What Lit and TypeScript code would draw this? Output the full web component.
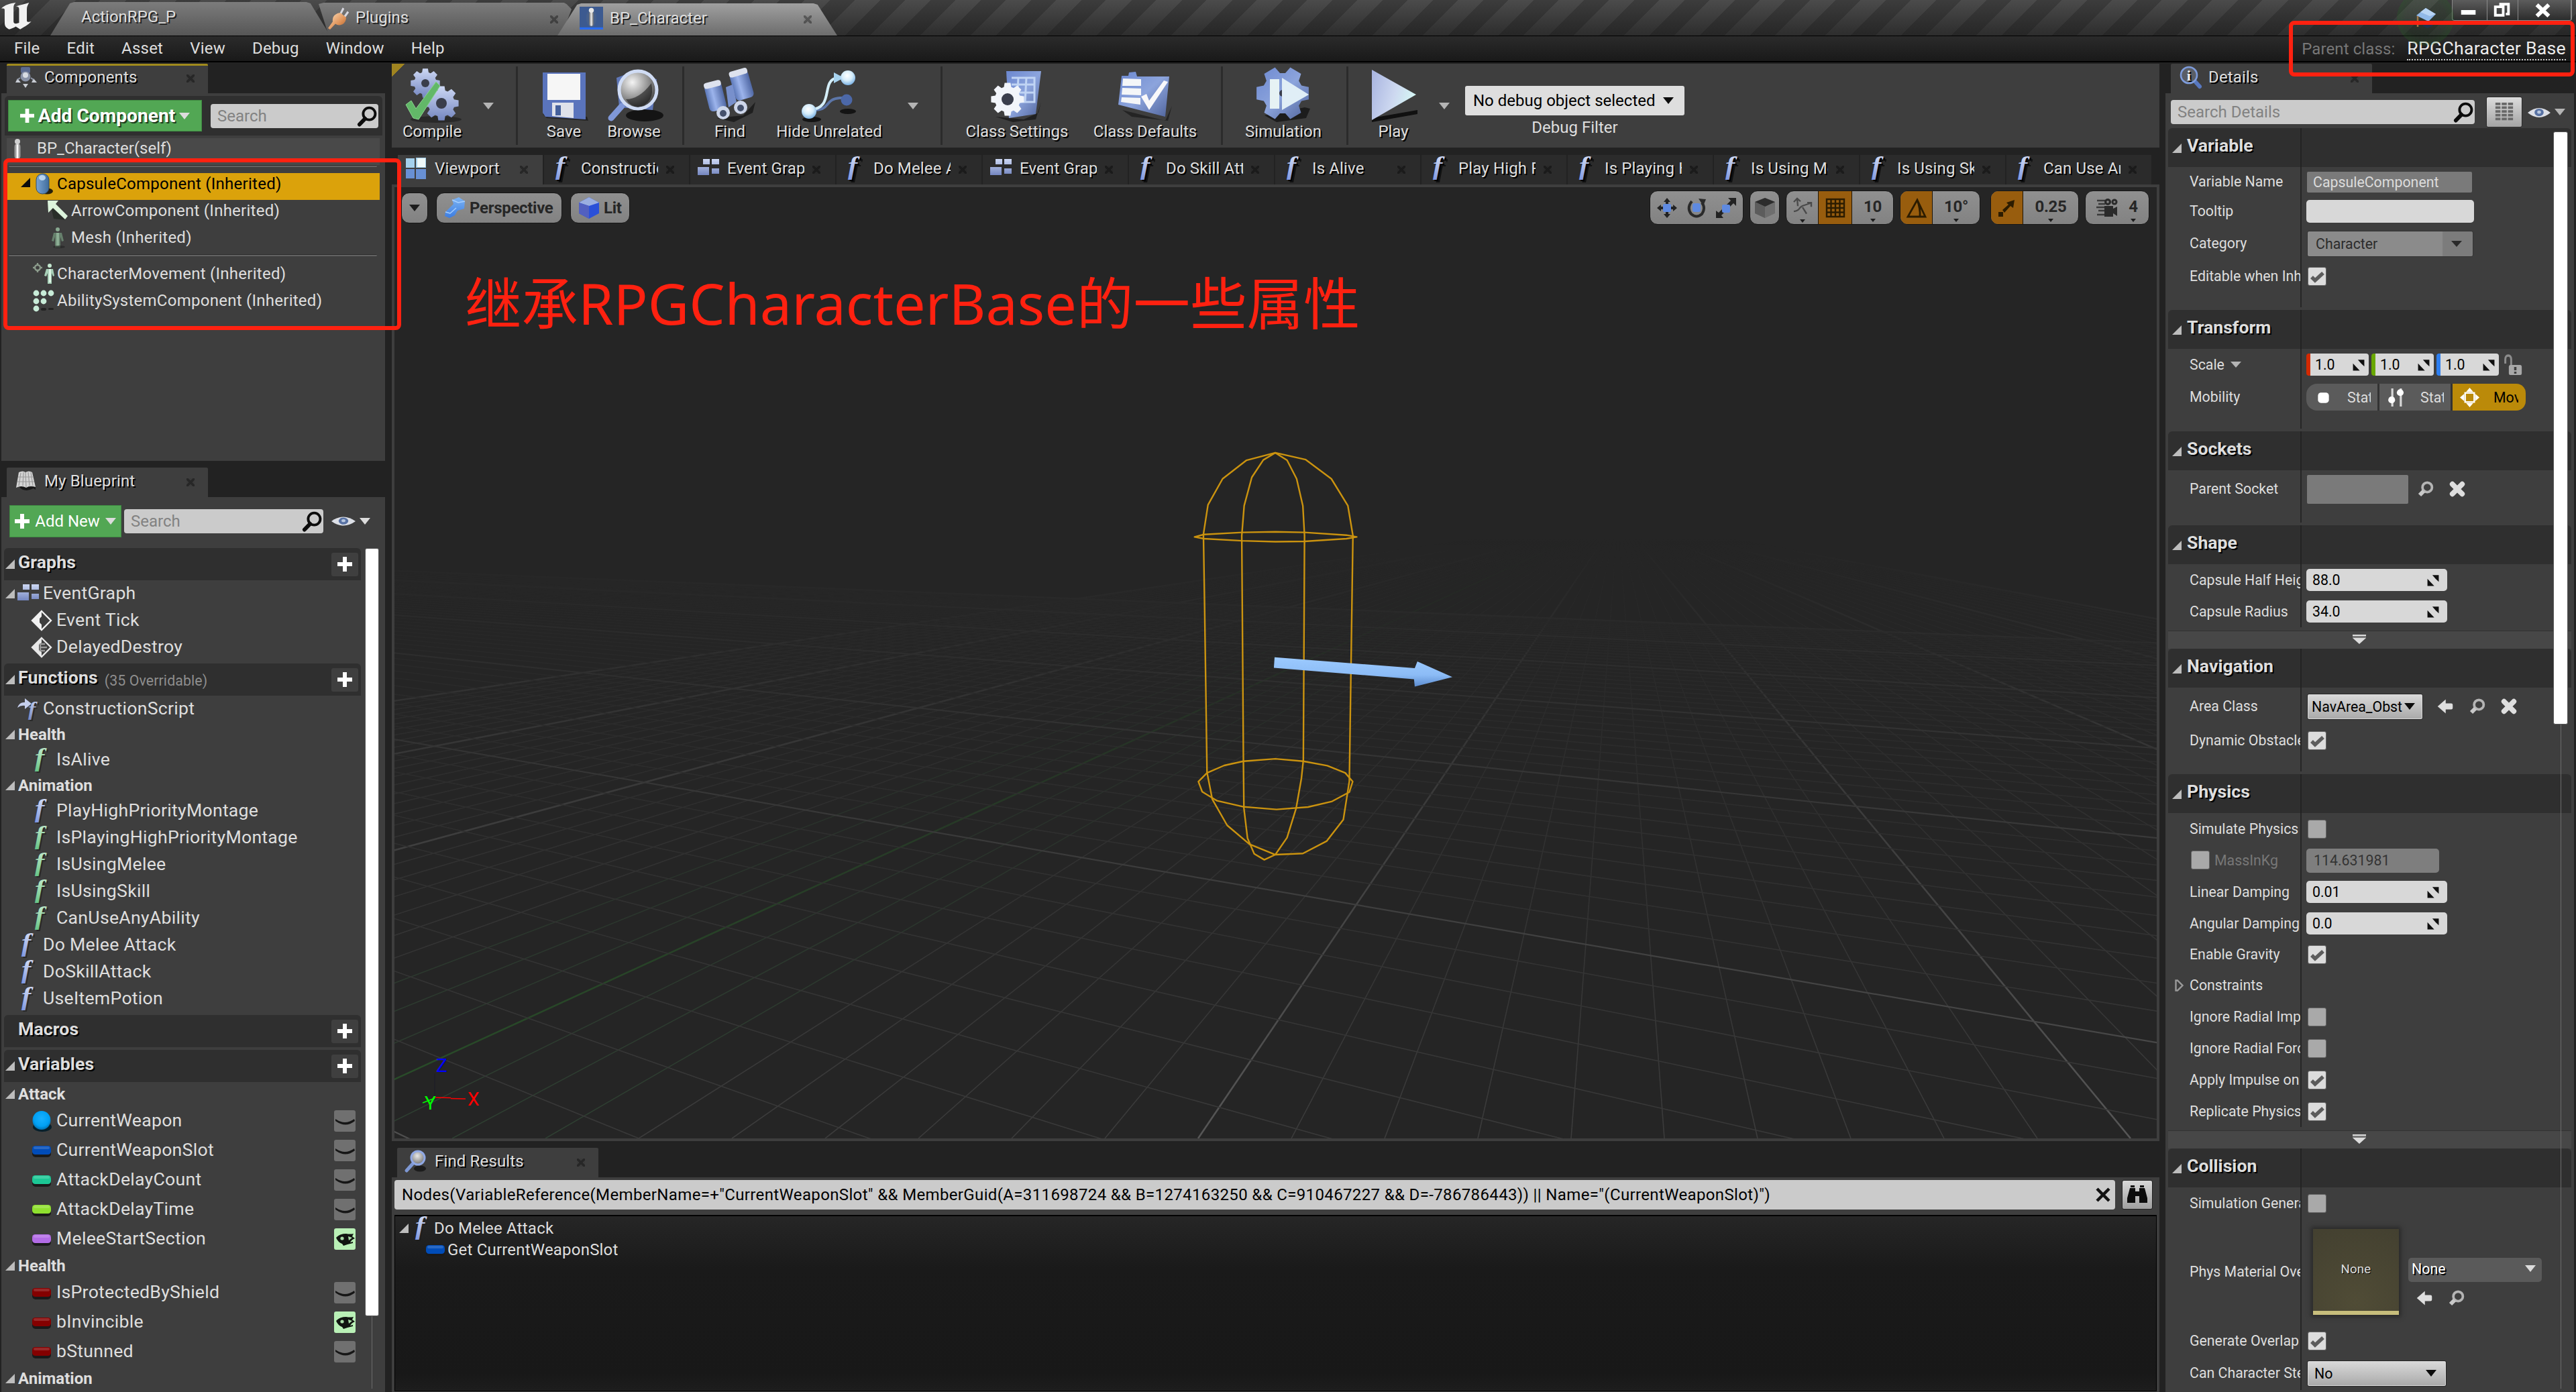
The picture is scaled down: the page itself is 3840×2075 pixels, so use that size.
import { LitElement, html, css, svg, nothing, TemplateResult } from "lit";
import { customElement, property } from "lit/decorators.js";
import { classMap } from "lit/directives/class-map.js";

const gear = (cx: number, cy: number, r: number, hole: number, fill: string, teeth = 8) => {
  const pts: string[] = [];
  for (let i = 0; i < teeth; i++) {
    const a = (i / teeth) * Math.PI * 2;
    const s = Math.PI / teeth;
    for (const [d, k] of [[-0.75, 0.76], [-0.45, 1], [0.45, 1], [0.75, 0.76]]) {
      pts.push(`${(cx + Math.cos(a + s * d) * r * k).toFixed(1)},${(cy + Math.sin(a + s * d) * r * k).toFixed(1)}`);
    }
  }
  return svg`<polygon points=${pts.join(" ")} fill=${fill} /><circle cx=${cx} cy=${cy} r=${hole} fill="#3a3e4c" />`;
};

const fGlyph = (fill: string, size = 37, x = 6, y = 25) =>
  svg`<g transform="translate(${x} ${y}) scale(1.15 1)" font-family="Liberation Serif, serif" font-style="italic" font-weight="700" font-size=${size}>
    <text x="2" y="2" fill="#1c1c1c" opacity=".6">f</text><text fill=${fill}>f</text></g>`;

const pill = (fill: string) => svg`
  <rect x="2" y="10" width="28" height="16" rx="5" fill="#1a1a1a" />
  <rect x="2" y="9" width="28" height="13" rx="4.5" fill=${fill} />
  <rect x="4" y="10" width="24" height="4" rx="2" fill="#fff" opacity=".16" />`;

const ICONS: Record<string, TemplateResult | unknown> = {
  logo: svg`<path d="M0 8C3 3 8 1 13 0C11 3 11 5 11 9V26C11 29 13 30 16 28V9C16 6 15 5 13 5C17 3 21 2 25 0C24 3 23 5 23 9V25C23 27 25 27 27 26C24 31 20 34 17 37L13 33C11 35 9 36 7 37C4 35 3 32 3 28V10C3 8 2 8 0 8Z" transform="scale(1.15 .86)" fill="#f2f2f2"/>`,
  plug: svg`<path d="M19 11L24 2M25 15L31 7" stroke="#d8d8e0" stroke-width="3"/><path d="M12 11Q17 8 20 9L28 15Q28 22 22 25Q16 27 12 24L4 32L1 30L8 21Q7 14 12 11Z" fill="url(#gOrange)"/>`,
  bp: svg`<rect width="32" height="32" fill="#3c5a90"/><rect y="29" width="32" height="3" fill="#2a6cf0"/><ellipse cx="16" cy="16" rx="7" ry="13" fill="#46608c"/><rect x="13" y="7" width="6" height="20" rx="3" fill="url(#gSilver)"/><circle cx="16" cy="5" r="3.4" fill="#e8e8e8"/>`,
  self: svg`<circle cx="16" cy="5" r="4" fill="#d0d0d0"/><rect x="11" y="8" width="10" height="23" rx="5" fill="url(#gSilver)"/><rect x="15" y="10" width="2" height="20" fill="#fff"/>`,
  components: svg`<rect x="9" y="1" width="14" height="9" rx="2" fill="#5b6a90"/><circle cx="16" cy="15" r="7.5" fill="#8a93a8"/><circle cx="16" cy="13" r="4" fill="#d8dce4"/><path d="M4 18l5 6H1zM28 18l5 6h-8zM12 26h8l-4 6z" fill="#c9cdd4"/><path d="M8 17L4 20M24 17l4 3" stroke="#9098a8" stroke-width="2"/>`,
  capsule: svg`<ellipse cx="21" cy="27" rx="9" ry="4.5" fill="#27200a"/><rect x="5" y="1" width="19" height="30" rx="9" fill="url(#gCapsule)" stroke="#2d4c6c"/><ellipse cx="14" cy="7" rx="5" ry="4" fill="#cfe6fa" opacity=".8"/>`,
  arrow: svg`<path d="M6 10L10 28L28 30Z" fill="#1c241c" opacity=".6"/><path d="M1 1H17L13 6L31 24L27 29L9 12L2 19Z" fill="#dcf4dc"/>`,
  mesh: svg`<circle cx="16" cy="4" r="3" fill="#88a890"/><path d="M10 9H22L25 21L22 22L20 15V31H12V15L10 22L7 21Z" fill="#66806c"/><rect x="14" y="9" width="4" height="20" fill="#8cae94"/><ellipse cx="18" cy="30" rx="9" ry="2" fill="#222" opacity=".6"/>`,
  movement: svg`<circle cx="7" cy="7" r="4" fill="none" stroke="#8c9c8c" stroke-width="2.4"/><path d="M7 0v3M7 11v3M0 7h3M11 7h3" stroke="#8c9c8c" stroke-width="2.4"/><circle cx="25" cy="4" r="3" fill="#c4e8d0"/><path d="M20 9H30L32 19L30 20L28 15V31H22V15L20 20L17 19Z" fill="#a8d0b8"/><rect x="24" y="9" width="3" height="20" fill="#dcf4e4"/>`,
  ability: svg`${[[5, 5], [16, 5], [27, 5], [5, 17], [16, 17], [5, 28]].map(([x, y]) => svg`<circle cx=${x} cy=${y} r="4.4" fill="#c8ecd8"/>`)}<rect x="12" y="27" width="8" height="4" rx="2" fill="#222"/><rect x="23" y="27" width="8" height="3" rx="1.5" fill="#222"/>`,
  book: svg`<path d="M6 24Q14 34 28 27L31 29V25L4 23Z" fill="#181818"/><path d="M6 3Q12 0 16 3Q21 0 26 3L31 25Q23 22 17 26Q10 22 2 26Z" fill="#d4d4d4"/><path d="M16 3L17 26M9 4L6 23M13 3L12 23M20 3L22 23M24 3L27 23M5 10H28M4 17H29" stroke="#9a9a9a" stroke-width="1.2"/>`,
  search: svg`<circle cx="19" cy="12" r="9.3" fill="none" stroke="#0c0c0c" stroke-width="4"/><path d="M12.5 19.5L4 28.5" stroke="#0c0c0c" stroke-width="6" stroke-linecap="round"/>`,
  mag: svg`<circle cx="19" cy="12.5" r="9.5" fill="none" stroke="#b4b4b4" stroke-width="5"/><path d="M12 20L4 28" stroke="#c8c8c8" stroke-width="8"/>`,
  cross: svg`<path d="M7 7L25 25M25 7L7 25" stroke="#dedede" stroke-width="9.5" stroke-linecap="round"/>`,
  back: svg`<path d="M1 16L17 2V10H28Q31 10 31 13V19Q31 22 28 22H17V30Z" fill="#dedede"/>`,
  eye: svg`<path d="M0 16Q16 0 32 16Q16 32 0 16Z" fill="#dcdfe6"/><circle cx="16" cy="15.5" r="6.4" fill="#5872a4"/><circle cx="16" cy="15" r="2.6" fill="#b8c8e0"/>`,
  closed: svg`<rect width="32" height="32" rx="3" fill="#707070"/><path d="M2 13Q16 23 30 13L31 16Q17 27 2 16Z" fill="#161616"/>`,
  open: svg`<rect width="32" height="32" rx="3" fill="#b9f0b6"/><path d="M3 14Q8 8 18 8Q24 9 29 8L27 12L31 15Q26 17 24 21L28 20V22L20 24L14 26L12 23Q6 21 3 14Z" fill="#101410"/><circle cx="12" cy="15" r="2.6" fill="#a8dca6"/><path d="M21 12L27 14L22 18Z" fill="#a8dca6"/>`,
  graph: svg`<path d="M8 2h10v8H8zM21 2h11v8H21zM0 14h17v12H0zM21 16h11v8H21z" fill="url(#gBlue)"/>`,
  event: svg`<path d="M16 2L30 16L16 30L2 16Z" fill="none" stroke="#f0f0f0" stroke-width="2.4"/><path d="M16 2V10L13 13V19L16 22V30L2 16Z" fill="#f0f0f0"/>`,
  custom: svg`<path d="M16 2L30 16L16 30L2 16Z" fill="none" stroke="#e8e8e8" stroke-width="2.4"/><path d="M16 2V9L12 12V20L16 23V30L2 16Z" fill="#e8e8e8"/><path d="M14 10V22M15 11H21M15 16H24M15 21H21" stroke="#999" stroke-width="2.4"/>`,
  construct: svg`<path d="M0 14Q3 5 11 6V0L21 8L11 16V11Q5 10 0 14Z" fill="#c4ceec"/>${fGlyph("url(#gBlue)", 29, 16, 26)}`,
  fBlue: fGlyph("url(#gBlueF)"),
  fGreen: fGlyph("url(#gGreenF)"),
  object: svg`<ellipse cx="17" cy="25" rx="14" ry="7" fill="#06202c"/><ellipse cx="16" cy="15" rx="13.5" ry="14" fill="url(#gObj)"/>`,
  vBlue: pill("#004cb8"),
  vTeal: pill("#1cc795"),
  vGreen: pill("#8fe02f"),
  vPurple: pill("#b36ce6"),
  vRed: pill("#840000"),
  viewport: svg`<path d="M1 1H14V15H1zM16 0H31V15H16z" fill="#a4d0ec"/><path d="M18 1h12v13H18z" fill="#eef8f8"/><path d="M1 17H14V31H1zM16 17H31V32H16z" fill="#6890d4"/>`,
  info: svg`<path d="M22 20L31 30" stroke="#5878c0" stroke-width="6" stroke-linecap="round"/><circle cx="15" cy="13" r="12" fill="#5a5e66" stroke="#7e9cdc" stroke-width="2.6"/><text x="15" y="21" text-anchor="middle" font-family="Liberation Serif, serif" font-weight="700" font-size="22" fill="#f0f0f0">i</text>`,
  find: svg`<ellipse cx="22" cy="27" rx="9" ry="4.5" fill="#1c1c1c"/><path d="M11 20L2 30" stroke="#7e98d4" stroke-width="5" stroke-linecap="round"/><circle cx="19" cy="11" r="10" fill="url(#gLens)" stroke="#90a8e4" stroke-width="3"/>`,
  grid: svg`${[3, 9, 15, 21, 27].map((y) => svg`<path d="M2 ${y}h8M12 ${y}h8M22 ${y}h8" stroke="#686868" stroke-width="4"/>`)}`,
  lock: svg`<path d="M3 14V8Q3 2 8 2Q13 2 13 8V16" fill="none" stroke="#8c8c8c" stroke-width="3.4"/><rect x="9" y="16" width="22" height="15" rx="2.5" fill="#a8a8a8"/><path d="M20 19v5M20 26v3" stroke="#3e3e3e" stroke-width="4"/>`,
  spin: svg`<path d="M14 2H31V20Q22 12 14 2ZM1 12V31H19Q10 22 1 12Z" fill="#101010"/>`,
  static: svg`<rect x="7" y="8" width="18" height="17" rx="5" fill="#fff"/>`,
  sliders: svg`<path d="M9 1V31M23 1V31" stroke="#d8d8d8" stroke-width="3.5"/><circle cx="8" cy="20" r="5.6" fill="#fff"/><circle cx="22" cy="8" r="5.6" fill="#fff"/>`,
  move: svg`<rect x="8.5" y="8.5" width="15" height="15" fill="none" stroke="#fff" stroke-width="2.6"/><path d="M16 0L22 7H10zM16 32L22 25H10zM0 16L7 10V22zM32 16L25 10V22z" fill="#fff"/>`,
  persp: svg`<path d="M2 22L14 10L12 4L22 0L31 6L30 17L20 20L16 27L8 31L1 28Z" fill="url(#gPersp)"/><path d="M12 4L21 8L31 6M2 22L9 24L18 16" stroke="#a8d0ff" stroke-width="1.5" fill="none"/>`,
  cube: svg`<path d="M16 0L31 8V24L16 32L1 24V8Z" fill="#2a50d8"/><path d="M16 0L31 8L16 13L1 8Z" fill="#9aaee0"/><path d="M1 8L16 13V32L1 24Z" fill="#5260c0"/>`,
  cubeDark: svg`<path d="M16 1L31 7V24L16 31L1 24V7Z" fill="#6e6e6e"/><path d="M16 1L31 7L16 14L1 7Z" fill="#2c2c2c"/><path d="M16 14V31L1 24V7Z" fill="#5c5c5c"/>`,
  translate: svg`<path d="M16 1L21 7H18V25H21L16 31L11 25H14V7H11zM1 16L7 11V14H25V11L31 16L25 21V18H7V21z" fill="#222"/><rect x="10" y="10" width="12" height="12" rx="2" fill="#5f8ae0"/>`,
  rotate: svg`<path d="M9 6Q1 16 8 25Q16 32 24 25Q30 16 24 8" fill="none" stroke="#2a2a2a" stroke-width="4"/><path d="M19 2L30 3L26 13Z" fill="#2a2a2a"/><rect x="10" y="9" width="12" height="13" rx="3" fill="#5f8ae0"/>`,
  scale: svg`<path d="M31 1V13L27 9L9 27L12 31H1V20L5 23L23 5L19 1Z" fill="#222"/><rect x="10" y="11" width="12" height="12" rx="2" fill="#5f8ae0"/>`,
  surface: svg`<path d="M8 1L9 14M3 7L8 1L13 6M3 23Q10 22 12 17Q15 13 20 12L28 9M23 8H29V15M16 16L22 27" fill="none" stroke="#4a4a4a" stroke-width="2.4"/>`,
  snapGrid: svg`<path d="M3 3H29V29H3zM9.5 3V29M16 3V29M22.5 3V29M3 9.5H29M3 16H29M3 22.5H29" fill="none" stroke="#2c1c00" stroke-width="2.4"/>`,
  angle: svg`<path d="M3 29H29L17 4ZM17 4Q22 18 21 29" fill="none" stroke="#2c1c00" stroke-width="2.8"/>`,
  snapScale: svg`<path d="M15 8L27 4L25 16L21 13L12 23L9 19L18 11Z" fill="#2c1c00"/><rect x="3" y="22" width="7" height="7" fill="#2c1c00"/>`,
  camera: svg`<path d="M1 5H13M3 10H13M0 15H12M3 20H13M1 26H13" stroke="#3a3a3a" stroke-width="2.4"/><circle cx="17" cy="7" r="5" fill="#2a2a2a"/><circle cx="27" cy="7" r="4.5" fill="#2a2a2a"/><path d="M12 13H25V17L31 14V28L25 24V29H12z" fill="#2a2a2a"/><circle cx="17" cy="7" r="1.8" fill="#888"/><circle cx="27" cy="7" r="1.6" fill="#888"/>`,
  binoc: svg`<path d="M5 6H13V11H19V6H27L31 21V28H19V18H13V28H1V21Z" fill="#0c0c0c"/><path d="M6 2H12V5H6zM20 2H26V5H20z" fill="#0c0c0c"/>`,
  cap: svg`<path d="M16 1L31 10L20 21L2 12Z" fill="#90b8e8"/><path d="M16 1L31 10L22 13L8 7Z" fill="#b8d4f4"/><path d="M10 20L20 24L26 18V28L18 31L12 28Z" fill="#22324c"/><path d="M4 13V29" stroke="#a07848" stroke-width="2.4"/>`,
};

const BIG: Record<string, unknown> = {
  compile: svg`<ellipse cx="46" cy="76" rx="38" ry="5" fill="#1c1c1c" opacity=".6"/>${gear(30, 22, 22, 6, "url(#gBlue)")}${gear(54, 52, 26, 8, "url(#gBlue)")}<path d="M1 54L9 48L16 60L46 20L52 26L20 76L12 74Z" fill="#62b868" stroke="#8cd490" stroke-width="1"/>`,
  save: svg`<path d="M8 68L74 72L76 78L14 74Z" fill="#181818" opacity=".7"/><path d="M8 6H72V76L12 72L8 66Z" fill="#5a74bc"/><path d="M15 8H64V47H15z" fill="#f6f6f6"/><path d="M22 51H54V74L22 71z" fill="#dfe2ea"/><path d="M27 55H35V70H27z" fill="#44609c"/>`,
  browse: svg`<ellipse cx="56" cy="70" rx="28" ry="9" fill="#141414"/><path d="M14 14L30 8L74 16L68 62L18 58Z" fill="#6078b8"/><path d="M22 56L6 74" stroke="#8098d8" stroke-width="9" stroke-linecap="round"/><circle cx="46" cy="32" r="28" fill="url(#gLensDark)" stroke="#d0dcf4" stroke-width="5"/><path d="M28 46Q48 46 66 22Q72 52 46 58Q34 56 28 46Z" fill="#111" opacity=".55"/>`,
  find: svg`<path d="M20 74L60 70L78 50L74 66L46 80Z" fill="#181818" opacity=".8"/><g transform="rotate(-14 22 44)"><rect x="6" y="20" width="26" height="42" rx="6" fill="url(#gBarrel)"/><rect x="6" y="18" width="26" height="9" rx="4" fill="#dde2ee"/></g><g transform="rotate(-16 58 26)"><rect x="44" y="4" width="28" height="42" rx="6" fill="url(#gBarrel)"/><rect x="44" y="1" width="28" height="9" rx="4" fill="#dde2ee"/></g><path d="M34 28L44 24L50 50L38 58Z" fill="#7890cc"/><circle cx="30" cy="66" r="10" fill="#cdd6ea"/><circle cx="56" cy="58" r="10" fill="#cdd6ea"/><circle cx="30" cy="67" r="5" fill="#44506c"/><circle cx="56" cy="59" r="5" fill="#44506c"/>`,
  hide: svg`<ellipse cx="14" cy="76" rx="14" ry="4" fill="#141414"/><ellipse cx="68" cy="64" rx="12" ry="4" fill="#141414"/><path d="M10 62C46 64 30 46 56 44H62" fill="none" stroke="#5c76a8" stroke-width="4"/><path d="M10 62C50 60 26 18 52 14" fill="none" stroke="#d4eef8" stroke-width="4"/><path d="M47 6L62 14L47 22Z" fill="#a8d4f0"/><circle cx="68" cy="14" r="11" fill="url(#gNode)"/><circle cx="66" cy="47" r="8.5" fill="#4c68a8"/><circle cx="10" cy="64" r="11" fill="url(#gNode)"/>`,
  classSettings: svg`<path d="M8 72L50 76L72 66L76 50L68 76L34 80Z" fill="#141414" opacity=".7"/><path d="M24 4H76L68 68L28 74Z" fill="url(#gPanel)"/><path d="M32 14H66V50H34M42 14L40 50M54 14L52 50M32 24H66M33 36H66" stroke="#c0d4f4" stroke-width="3" fill="none"/>${gear(26, 46, 25, 9, "#f2f5fa")}`,
  classDefaults: svg`<path d="M6 62L70 78L80 56L74 78L20 72Z" fill="#141414" opacity=".6"/><path d="M16 6L26 5L28 12L76 12L70 72L0 54L5 11H15Z" fill="url(#gPanel)"/><path d="M7 15L34 16V26H6zM6 29L34 30V40L5 39zM5 43L33 44V54L4 50z" fill="#f4f6f8"/><path d="M34 42L42 38L46 48L68 18L74 20L46 62Z" fill="#f8f8fa"/>`,
  simulation: svg`<path d="M12 70L72 58L80 60L74 74L30 80Z" fill="#141414" opacity=".8"/>${gear(39, 37, 40, 5, "url(#gPanel)", 6)}<path d="M20 16H34V60H20z" fill="#e6f2f4"/><path d="M38 14L78 39L38 62Z" fill="#e0eef6"/>`,
  play: svg`<path d="M8 74L76 62V68L8 80Z" fill="#101010"/><path d="M8 2L74 39L8 77Z" fill="url(#gPlay)"/>`,
};

const DEFS = svg`<defs>
  <linearGradient id="gOrange" x1="0" y1="0" x2="1" y2="1"><stop offset="0" stop-color="#ffe0bc"/><stop offset=".6" stop-color="#e0945a"/><stop offset="1" stop-color="#a85c28"/></linearGradient>
  <linearGradient id="gSilver" x1="0" x2="1"><stop offset="0" stop-color="#6a6a6a"/><stop offset=".5" stop-color="#e8e8e8"/><stop offset="1" stop-color="#6a6a6a"/></linearGradient>
  <linearGradient id="gCapsule" x1="0" x2="1"><stop offset="0" stop-color="#7aa4d4"/><stop offset="1" stop-color="#3f6c9c"/></linearGradient>
  <linearGradient id="gBlue" x1="0" y1="0" x2="0" y2="1"><stop offset="0" stop-color="#cdd8f4"/><stop offset="1" stop-color="#7486c0"/></linearGradient>
  <linearGradient id="gBlueF" x1="0" y1="0" x2="0" y2="1"><stop offset="0" stop-color="#dfe6f6"/><stop offset="1" stop-color="#7f98e2"/></linearGradient>
  <linearGradient id="gGreenF" x1="0" y1="0" x2="0" y2="1"><stop offset="0" stop-color="#cdeed4"/><stop offset="1" stop-color="#66c486"/></linearGradient>
  <radialGradient id="gObj" cx=".5" cy=".4" r=".6"><stop offset="0" stop-color="#18b0ff"/><stop offset=".7" stop-color="#00a0f4"/><stop offset="1" stop-color="#0070b0"/></radialGradient>
  <radialGradient id="gLens" cx=".45" cy=".35" r=".7"><stop offset="0" stop-color="#e8e8e8"/><stop offset="1" stop-color="#6c6c6c"/></radialGradient>
  <radialGradient id="gLensDark" cx=".35" cy=".3" r=".75"><stop offset="0" stop-color="#f4f4f4"/><stop offset=".6" stop-color="#8c8c8c"/><stop offset="1" stop-color="#3a3a3a"/></radialGradient>
  <linearGradient id="gBarrel" x1="0" x2="1"><stop offset="0" stop-color="#5c78b8"/><stop offset=".4" stop-color="#9cb4ec"/><stop offset="1" stop-color="#5068a4"/></linearGradient>
  <radialGradient id="gNode" cx=".45" cy=".35" r=".7"><stop offset="0" stop-color="#fff"/><stop offset=".5" stop-color="#d4ecfa"/><stop offset="1" stop-color="#6ca8e0"/></radialGradient>
  <linearGradient id="gPanel" x1="0" y1="0" x2="1" y2="1"><stop offset="0" stop-color="#6c88d0"/><stop offset=".5" stop-color="#8ca4dc"/><stop offset="1" stop-color="#50649c"/></linearGradient>
  <linearGradient id="gPlay" x1="0" y1="0" x2="1" y2=".3"><stop offset="0" stop-color="#a8b4e0"/><stop offset=".6" stop-color="#cdd8f0"/><stop offset="1" stop-color="#d4f4f4"/></linearGradient>
  <linearGradient id="gPersp" x1="0" y1="0" x2="0" y2="1"><stop offset="0" stop-color="#7cb4f4"/><stop offset="1" stop-color="#3c7ce0"/></linearGradient>
</defs>`;

@customElement("ed-icon")
export class EdIcon extends LitElement {
  @property() name = "";
  static styles = css`
    :host { display: block; flex: none; width: 32px; height: 32px; }
    svg { display: block; width: 100%; height: 100%; overflow: visible; }
  `;
  render() {
    const big = this.name.startsWith("big:");
    return html`<svg viewBox=${big ? "0 0 80 80" : "0 0 32 32"} preserveAspectRatio=${big ? "xMidYMid" : "none"}>
      ${DEFS}${big ? BIG[this.name.slice(4)] : ICONS[this.name]}
    </svg>`;
  }
}

const base = css`
  * { box-sizing: border-box; }
  .caret { width: 0; height: 0; flex: none; border-left: 8px solid transparent; border-right: 8px solid transparent; border-top: 10px solid #dcdcdc; }
  .caret.dark { border-top-color: #0c0c0c; }
  .caret.soft { border-top-color: #b4b4b4; }
  .tri { width: 14px; height: 14px; flex: none; background: #bdbdbd; clip-path: polygon(100% 0, 100% 100%, 0 100%); }
  .panel-tab { display: flex; align-items: center; width: 300px; height: 44px; margin-left: 8px; padding: 0 20px 4px 12px; background: #3e3e3e; border-radius: 2px 2px 0 0; text-shadow: 2px 2px 0 #000; letter-spacing: .15px; }
  .panel-tab ed-icon { margin-right: 12px; }
  .panel-tab .close { margin-left: auto; }
  .close { flex: none; width: 12px; height: 12px; margin-top: 4px; opacity: .36; background: linear-gradient(45deg, transparent 40%, #000 40% 60%, transparent 60%), linear-gradient(-45deg, transparent 40%, #000 40% 60%, transparent 60%), rgba(0, 0, 0, .16); }
  .search { display: flex; align-items: center; height: 36px; padding: 0 1px 0 10px; background: #cbcbcb; border-radius: 4px; color: #828282; }
  .search span { flex: 1; }
  .search ed-icon { width: 31px; height: 31px; }
`;

interface CompRow { icon: string; label: string; depth: number; selected?: boolean; open?: boolean; gap?: boolean }
const COMPONENTS: CompRow[] = [
  { icon: "capsule", label: "CapsuleComponent (Inherited)", depth: 0, selected: true, open: true },
  { icon: "arrow", label: "ArrowComponent (Inherited)", depth: 1 },
  { icon: "mesh", label: "Mesh (Inherited)", depth: 1 },
  { icon: "movement", label: "CharacterMovement (Inherited)", depth: 0, gap: true },
  { icon: "ability", label: "AbilitySystemComponent (Inherited)", depth: 0 },
];

type Entry =
  | { kind: "head"; label: string; note?: string; open?: boolean }
  | { kind: "cat"; label: string }
  | { kind: "item"; label: string; icon: string; depth: number; open?: boolean }
  | { kind: "var"; label: string; icon: string; eye: boolean };

const BLUEPRINT: Entry[] = [
  { kind: "head", label: "Graphs", open: true },
  { kind: "item", label: "EventGraph", icon: "graph", depth: 0, open: true },
  { kind: "item", label: "Event Tick", icon: "event", depth: 1 },
  { kind: "item", label: "DelayedDestroy", icon: "custom", depth: 1 },
  { kind: "head", label: "Functions", note: "(35 Overridable)", open: true },
  { kind: "item", label: "ConstructionScript", icon: "construct", depth: 0 },
  { kind: "cat", label: "Health" },
  { kind: "item", label: "IsAlive", icon: "fGreen", depth: 1 },
  { kind: "cat", label: "Animation" },
  { kind: "item", label: "PlayHighPriorityMontage", icon: "fBlue", depth: 1 },
  { kind: "item", label: "IsPlayingHighPriorityMontage", icon: "fGreen", depth: 1 },
  { kind: "item", label: "IsUsingMelee", icon: "fGreen", depth: 1 },
  { kind: "item", label: "IsUsingSkill", icon: "fGreen", depth: 1 },
  { kind: "item", label: "CanUseAnyAbility", icon: "fGreen", depth: 1 },
  { kind: "item", label: "Do Melee Attack", icon: "fBlue", depth: 0 },
  { kind: "item", label: "DoSkillAttack", icon: "fBlue", depth: 0 },
  { kind: "item", label: "UseItemPotion", icon: "fBlue", depth: 0 },
  { kind: "head", label: "Macros" },
  { kind: "head", label: "Variables", open: true },
  { kind: "cat", label: "Attack" },
  { kind: "var", label: "CurrentWeapon", icon: "object", eye: false },
  { kind: "var", label: "CurrentWeaponSlot", icon: "vBlue", eye: false },
  { kind: "var", label: "AttackDelayCount", icon: "vTeal", eye: false },
  { kind: "var", label: "AttackDelayTime", icon: "vGreen", eye: false },
  { kind: "var", label: "MeleeStartSection", icon: "vPurple", eye: true },
  { kind: "cat", label: "Health" },
  { kind: "var", label: "IsProtectedByShield", icon: "vRed", eye: false },
  { kind: "var", label: "bInvincible", icon: "vRed", eye: true },
  { kind: "var", label: "bStunned", icon: "vRed", eye: false },
  { kind: "cat", label: "Animation" },
];

@customElement("left-column")
export class LeftColumn extends LitElement {
  static styles = [base, css`
    :host { display: flex; flex-direction: column; width: 572px; height: 100%; overflow: hidden; }
    .tab-first { border-top: 3px solid #a08a1c; padding-bottom: 7px; }
    .panel { display: flex; flex-direction: column; background: #3e3e3e; }
    .components { height: 548px; padding: 4px 4px 0 5px; margin-bottom: 10px; }
    .bar { display: flex; align-items: center; height: 59px; padding: 0 6px 0 5px; background: #2f2f2f; border-radius: 6px 6px 0 0; }
    .add { display: flex; align-items: center; justify-content: center; background: #52a754; border: 1px solid #3f8c42; color: #fff; }
    .add svg { flex: none; }
    .add-component { width: 289px; height: 47px; gap: 6px; font-weight: 700; font-size: 28.2px; text-shadow: 2px 2px 0 #1c3c1c; margin-right: 13px; }
    .bar .search { width: 250px; margin-top: 1px; }
    .self { display: flex; height: 40px; margin: 4px 4px 0 3px; background: #494949; line-height: 31px; }
    .self ed-icon { margin-right: 13px; }
    .rule { height: 3px; margin: 0 8px 0 6px; background: #626262; border-top: 1px solid #2c2c2c; border-radius: 2px; }
    .row { display: flex; height: 40px; margin: 0 4px 0 3px; line-height: 33px; padding-left: 39px; letter-spacing: .26px; }
    .row ed-icon { margin-right: 4px; }
    .row .tri { background: #0c0c0c; margin: 7px 4px 0 -18px; }
    .row.deep { padding-left: 60px; }
    .row.selected { background: #dba20b; color: #000; margin-top: 9px; }
    .mesh-rule { margin-top: 1px; margin-bottom: 10px; }
    .blueprint { flex: 1; padding: 12px 4px 0 4px; overflow: hidden; }
    .tools { display: flex; align-items: center; height: 48px; padding-left: 8px; }
    .add-new { width: 167px; height: 48px; gap: 8px; margin-right: 4px; }
    .tools .search { width: 297px; margin-right: 12px; }
    .tools > ed-icon { width: 36px; height: 26px; margin-right: 6px; }
    .body { display: flex; margin-top: 16px; }
    .list { width: 532px; letter-spacing: .26px; }
    .head { display: flex; align-items: center; height: 48px; padding: 0 4px 0 2px; background: #2f2f2f; border-radius: 6px 6px 0 0; letter-spacing: .1px; }
    .head.spaced { margin-top: 4px; }
    .head .name { font-weight: 700; font-size: 26.67px; text-shadow: 2px 2px 0 #000; margin: 0 auto 4px 5px; }
    .head .name.noted { margin-right: 10px; }
    .head .note { font-size: 21.33px; color: #8e8e8e; margin-right: auto; padding-top: 3px; }
    .head .indent { width: 14px; }
    .head .plus { display: flex; align-items: center; justify-content: center; width: 40px; height: 35px; background: #3f3f3f; border-radius: 3px; }
    .cat { display: flex; align-items: center; height: 36px; padding-left: 2px; gap: 5px; font-weight: 700; letter-spacing: 0; }
    .item { display: flex; align-items: center; height: 40px; padding-left: 20px; font-size: 26.67px; }
    .item.deep { padding-left: 40px; }
    .item.opened { padding-left: 2px; gap: 4px; }
    .item.opened ed-icon { margin-right: 2px; }
    .item ed-icon { margin-right: 6px; }
    .var { display: flex; align-items: center; height: 44px; padding: 0 8px 0 40px; font-size: 26.67px; }
    .var ed-icon { margin-right: 6px; }
    .var .eye { margin: 0 0 0 auto; }
    .scroll { display: flex; flex-direction: column; align-items: center; width: 20px; margin-left: 6px; height: 1253px; }
    .thumb { width: 21px; height: 1145px; background: #fff; border: 1px solid #555; border-radius: 3px; }
    .track { flex: 1; width: 1px; background: #6a6a6a; }
  `];

  private plus(size: number) {
    return html`<svg width=${size} height=${size} viewBox="0 0 22 22"><path d="M8 0h6v8h8v6h-8v8H8v-8H0V8h8z" fill="#fff"/></svg>`;
  }

  private entry(e: Entry, i: number) {
    switch (e.kind) {
      case "head":
        return html`<div class=${classMap({ head: true, spaced: i > 0 })}>
          ${e.open ? html`<i class="tri"></i>` : html`<i class="indent"></i>`}
          <span class=${classMap({ name: true, noted: !!e.note })}>${e.label}</span>
          ${e.note ? html`<span class="note">${e.note}</span>` : nothing}
          <span class="plus">${this.plus(22)}</span>
        </div>`;
      case "cat":
        return html`<div class="cat"><i class="tri"></i><span>${e.label}</span></div>`;
      case "item":
        return html`<div class=${classMap({ item: true, deep: e.depth === 1, opened: !!e.open })}>
          ${e.open ? html`<i class="tri"></i>` : nothing}<ed-icon name=${e.icon}></ed-icon><span>${e.label}</span>
        </div>`;
      case "var":
        return html`<div class="var"><ed-icon name=${e.icon}></ed-icon><span>${e.label}</span><ed-icon class="eye" name=${e.eye ? "open" : "closed"}></ed-icon></div>`;
    }
  }

  render() {
    return html`
      <div class="panel-tab tab-first"><ed-icon name="components"></ed-icon><span>Components</span><i class="close"></i></div>
      <div class="panel components">
        <div class="bar">
          <div class="add add-component">${this.plus(21)}<span>Add Component</span><i class="caret"></i></div>
          <div class="search"><span>Search</span><ed-icon name="search"></ed-icon></div>
        </div>
        <div class="self"><ed-icon name="self"></ed-icon><span>BP_Character(self)</span></div>
        <div class="rule"></div>
        ${COMPONENTS.map((r) => html`
          ${r.gap ? html`<div class="rule mesh-rule"></div>` : nothing}
          <div class=${classMap({ row: true, deep: r.depth === 1, selected: !!r.selected })}>
            ${r.open ? html`<i class="tri"></i>` : nothing}<ed-icon name=${r.icon}></ed-icon><span>${r.label}</span>
          </div>`)}
      </div>
      <div class="panel-tab"><ed-icon name="book"></ed-icon><span>My Blueprint</span><i class="close"></i></div>
      <div class="panel blueprint">
        <div class="tools">
          <div class="add add-new">${this.plus(22)}<span>Add New</span><i class="caret"></i></div>
          <div class="search"><span>Search</span><ed-icon name="search"></ed-icon></div>
          <ed-icon name="eye"></ed-icon><i class="caret"></i>
        </div>
        <div class="body">
          <div class="list">${BLUEPRINT.map((e, i) => this.entry(e, i))}</div>
          <div class="scroll"><div class="thumb"></div><div class="track"></div></div>
        </div>
      </div>`;
  }
}

/* Perspective floor grid: both line families share one horizon. */
const HORIZON = 772;
const VP_FAR = 2412;
const VP_SIDE = -1330;
const FLOOR = 1697;
const STEP = 139;

const farLines = () => {
  const out: unknown[] = [];
  for (let n = -40; n <= 40; n++) {
    const x = 1786 + n * STEP;
    const major = n % 10 === 0;
    const green = n === -10;
    out.push(svg`<line x1=${x} y1=${FLOOR} x2=${VP_FAR} y2=${HORIZON} stroke=${green ? "#2c6a2c" : major ? "#747474" : n < -6 && n > -14 ? "#35503a" : "#4a4a4a"} stroke-width=${major ? 2.6 : 1.6}/>`);
  }
  return out;
};
const sideLines = () => {
  const out: unknown[] = [];
  for (let n = -4; n <= 60; n++) {
    const m = 1 / (2.096 + n * 0.3715);
    const x2 = 3300;
    const major = n % 10 === 0;
    out.push(svg`<line x1=${VP_SIDE} y1=${HORIZON} x2=${x2} y2=${HORIZON + m * (x2 - VP_SIDE)} stroke=${major ? "#686868" : "#464646"} stroke-width=${major ? 2.2 : 1.6}/>`);
  }
  return out;
};

@customElement("scene-view")
export class SceneView extends LitElement {
  static styles = css`
    :host { display: block; width: 100%; height: 100%; }
    svg { display: block; width: 100%; height: 100%; }
    .axis { font: 400 28px Roboto, sans-serif; }
    .title { font: 400 84.5px "Noto Sans", "Noto Sans CJK SC", sans-serif; fill: #ff2110; }
  `;
  render() {
    return html`<svg viewBox="588 279 2627 1418">
      <defs>
        <linearGradient id="fade" x1="0" x2="0" y1="279" y2="1697" gradientUnits="userSpaceOnUse">
          <stop offset=".37" stop-color="#000"/><stop offset=".5" stop-color="#222"/><stop offset=".7" stop-color="#555"/><stop offset="1" stop-color="#a0a0a0"/>
        </linearGradient>
        <mask id="floor" maskUnits="userSpaceOnUse" x="588" y="279" width="2627" height="1418"><rect x="588" y="279" width="2627" height="1418" fill="url(#fade)"/></mask>
        <linearGradient id="shaft" x1="0" x2="0" y1="0" y2="1"><stop offset="0" stop-color="#9ccaff"/><stop offset=".6" stop-color="#8cbcf6"/><stop offset="1" stop-color="#5c8cd0"/></linearGradient>
      </defs>
      <rect x="588" y="279" width="2627" height="1418" fill="#252525"/>
      <g mask="url(#floor)">${farLines()}${sideLines()}</g>
      <g transform="translate(1700 620) scale(.35714 .44643)" fill="none" stroke="#cb930f" stroke-width="2.4" stroke-linejoin="round">
        <path vector-effect="non-scaling-stroke" d="M563 123L443 148L343 210L282 297L263 395L268 640L278 1190L300 1280L362 1367L455 1430L563 1465L678 1461L777 1420L847 1348L872 1220L887 400L866 300L797 210L690 146Z"/>
        <path vector-effect="non-scaling-stroke" d="M563 123L513 147L465 205L433 300L423 400L430 1160L432 1310L447 1410L475 1462L517 1482L563 1465L612 1408L650 1310L672 1210L680 1150L685 400L678 300L652 210L612 148Z"/>
        <path vector-effect="non-scaling-stroke" d="M226 404L265 396L425 389L563 387L685 389L860 398L903 404L860 410L685 419L563 420L425 417L265 410Z"/>
        <path vector-effect="non-scaling-stroke" d="M242 1221L278 1192L350 1167L430 1153L563 1145L680 1153L780 1168L855 1192L886 1221L872 1256L800 1287L700 1306L568 1314L430 1305L320 1285L258 1255Z"/>
        <path d="M560 806L1145 842L1156 820L1302 872L1145 904L1142 879L557 841Z" fill="url(#shaft)" stroke="none"/>
      </g>
      <path d="M648 1637V1600" stroke="#1c1c28" stroke-width="1"/>
      <path d="M649 1636L672 1636.5M672 1637.5L694 1638" stroke="#ff0000" stroke-width="1.6"/>
      <path d="M648 1637L630 1644" stroke="#00ff00" stroke-width="1.6"/>
      <text class="axis" x="650" y="1598" fill="#0000ff">Z</text>
      <text class="axis" x="633" y="1654" fill="#00ff00">Y</text>
      <text class="axis" x="697" y="1648" fill="#ff0000">X</text>
      <text class="title" x="693" y="484">继承RPGCharacterBase的一些属性</text>
    </svg>`;
  }
}

const DOC_TABS: [string, string][] = [
  ["viewport", "Viewport"], ["fBlue", "Construction Script"], ["graph", "Event Graph"], ["fBlue", "Do Melee Attack"],
  ["graph", "Event Graph"], ["fBlue", "Do Skill Attack"], ["fBlue", "Is Alive"], ["fBlue", "Play High Priority"],
  ["fBlue", "Is Playing High"], ["fBlue", "Is Using Melee"], ["fBlue", "Is Using Skill"], ["fBlue", "Can Use Any Ability"],
];

@customElement("center-column")
export class CenterColumn extends LitElement {
  static styles = [base, css`
    :host { display: flex; flex-direction: column; width: 2635px; height: 100%; }
    .toolbar { display: grid; grid-template-columns: 120px 48px 37px 103px 106px 40px 100px 196px 54px 30px 196px 186px 42px 142px 49px 88px 63px 327px; justify-items: center; height: 125px; padding-top: 7px; background: linear-gradient(135deg, #a08420 0 14px, transparent 14px), #3e3e3e; flex: none; }
    .tool { display: flex; flex-direction: column; align-items: center; white-space: nowrap; text-shadow: 2px 2px 0 #000; line-height: 28px; }
    .tool ed-icon { width: 80px; height: 80px; }
    .toolbar > .caret { margin-top: 51px; }
    .sep { width: 3px; height: 117px; margin-top: -3px; background: #2b2b2b; }
    .debug { display: flex; flex-direction: column; align-items: center; width: 327px; padding-top: 26px; }
    .combo { display: flex; align-items: center; justify-content: space-between; width: 327px; height: 44px; padding: 0 16px 0 12px; background: #dedede; border-radius: 3px; color: #000; }
    .debug > span { margin-top: 4px; line-height: 28px; }
    .tabs { display: flex; flex: none; height: 44px; margin: 11px 0 0 7px; }
    .doc { display: flex; align-items: center; width: 218px; padding: 0 20px 4px 11px; background: #2b2b2b; border-left: 2px solid #222; text-shadow: 2px 2px 0 #000; letter-spacing: .15px; }
    .doc.active { background: #3e3e3e; }
    .doc ed-icon { width: 32px; margin-right: 12px; }
    .doc span { width: 115px; margin-right: 12px; overflow: hidden; white-space: nowrap; height: 32px; line-height: 32px; }
    .viewport { position: relative; flex: none; height: 1426px; padding: 4px; background: #3e3e3e; }
    .overlay { position: absolute; left: 14px; right: 15px; top: 9px; display: flex; align-items: flex-start; font-weight: 700; color: #262626; }
    .pill { display: flex; align-items: center; height: 46px; border-radius: 12px; background: linear-gradient(#909090, #828282); border: 1px solid #161616; margin-top: 3px; letter-spacing: -.3px; }
    .menu { width: 40px; justify-content: center; margin-right: 12px; }
    .menu .caret, .spin .caret { border-top-color: #1c1c1c; }
    .persp { width: 188px; margin-right: 12px; padding-left: 11px; gap: 6px; }
    .lit { width: 89px; margin-right: auto; padding-left: 11px; gap: 6px; }
    .group { height: 51px; margin: 0 0 0 9px; overflow: hidden; }
    .group.gap { margin-left: 15px; }
    .xf { width: 140px; justify-content: space-around; padding: 0 3px; }
    .one { width: 45px; justify-content: center; }
    .on { display: flex; align-items: center; justify-content: center; align-self: stretch; flex: none; background: #985d0e; border: solid #1c1408; border-width: 0 1px; }
    .spin { display: flex; flex: 1; flex-direction: column; align-items: center; line-height: 28px; padding-top: 6px; }
    .spin .caret { border-width: 5px 4px 0; border-left-color: transparent; border-right-color: transparent; margin-top: 4px; }
    .snap { width: 161px; }
    .snap .surf { flex: none; width: 47px; padding-top: 7px; }
    .surf ed-icon { height: 28px; }
    .snap .on { width: 51px; }
    .rot { width: 120px; }
    .rot .on, .scl .on { width: 48px; border-left: 0; }
    .scl { width: 132px; }
    .camg { width: 96px; padding-left: 16px; }
    .panel-tab { margin-top: 10px; flex: none; }
    .results { display: flex; flex-direction: column; flex: 1; padding: 4px 4px 1px; background: #3e3e3e; }
    .query { display: flex; align-items: center; gap: 10px; height: 44px; flex: none; }
    .query .field { display: flex; flex: 1; align-items: center; justify-content: space-between; height: 44px; padding: 0 6px 0 11px; background: #cbcbcb; border-radius: 4px; color: #000; letter-spacing: .36px; }
    .query .go { display: flex; align-items: center; justify-content: center; width: 46px; height: 44px; background: linear-gradient(#d8d8d8, #a0a0a0); border: 1px solid #222; border-radius: 3px; margin-right: 6px; }
    .hits { flex: 1; margin-top: 8px; padding: 2px 6px; border: 1px solid #000; border-top-width: 2px; background: linear-gradient(#262626, #1a1a1a 30%, #181818 90%, #1d1d1d); line-height: 32px; letter-spacing: .2px; }
    .hit { display: flex; align-items: center; height: 32px; }
    .hit .tri { margin-right: 4px; }
    .hit ed-icon { margin-right: 2px; }
    .hit.child { padding-left: 38px; }
  `];

  private tool(icon: string, label: string) {
    return html`<div class="tool"><ed-icon name="big:${icon}"></ed-icon><span>${label}</span></div>`;
  }

  render() {
    const caret = html`<i class="caret soft"></i>`;
    const sep = html`<i class="sep"></i>`;
    return html`
      <div class="toolbar">
        ${this.tool("compile", "Compile")}${caret}${sep}
        ${this.tool("save", "Save")}${this.tool("browse", "Browse")}${sep}
        ${this.tool("find", "Find")}${this.tool("hide", "Hide Unrelated")}${caret}${sep}
        ${this.tool("classSettings", "Class Settings")}${this.tool("classDefaults", "Class Defaults")}${sep}
        ${this.tool("simulation", "Simulation")}${sep}
        ${this.tool("play", "Play")}${caret}
        <div class="debug"><div class="combo"><span>No debug object selected</span><i class="caret dark"></i></div><span>Debug Filter</span></div>
      </div>
      <div class="tabs">
        ${DOC_TABS.map(([icon, label], i) => html`<div class=${classMap({ doc: true, active: i === 0 })}><ed-icon name=${icon}></ed-icon><span>${label}</span><i class="close"></i></div>`)}
      </div>
      <div class="viewport">
        <scene-view></scene-view>
        <div class="overlay">
          <div class="pill menu"><i class="caret"></i></div>
          <div class="pill persp"><ed-icon name="persp"></ed-icon><span>Perspective</span></div>
          <div class="pill lit"><ed-icon name="cube"></ed-icon><span>Lit</span></div>
          <div class="pill group xf"><ed-icon name="translate"></ed-icon><ed-icon name="rotate"></ed-icon><ed-icon name="scale"></ed-icon></div>
          <div class="pill group one"><ed-icon name="cubeDark"></ed-icon></div>
          <div class="pill group snap"><div class="surf spin"><ed-icon name="surface"></ed-icon><i class="caret"></i></div><div class="on"><ed-icon name="snapGrid"></ed-icon></div><div class="spin"><span>10</span><i class="caret"></i></div></div>
          <div class="pill group rot"><div class="on"><ed-icon name="angle"></ed-icon></div><div class="spin"><span>10°</span><i class="caret"></i></div></div>
          <div class="pill group gap scl"><div class="on"><ed-icon name="snapScale"></ed-icon></div><div class="spin"><span>0.25</span><i class="caret"></i></div></div>
          <div class="pill group camg"><ed-icon name="camera"></ed-icon><div class="spin"><span>4</span><i class="caret"></i></div></div>
        </div>
      </div>
      <div class="panel-tab"><ed-icon name="find"></ed-icon><span>Find Results</span><i class="close"></i></div>
      <div class="results">
        <div class="query">
          <div class="field"><span>Nodes(VariableReference(MemberName=+"CurrentWeaponSlot" &amp;&amp; MemberGuid(A=311698724 &amp;&amp; B=1274163250 &amp;&amp; C=910467227 &amp;&amp; D=-786786443)) || Name="(CurrentWeaponSlot)")</span>
            <svg width="24" height="24" viewBox="0 0 24 24"><path d="M3 3L21 21M21 3L3 21" stroke="#111" stroke-width="4.5"/></svg></div>
          <div class="go"><ed-icon name="binoc"></ed-icon></div>
        </div>
        <div class="hits">
          <div class="hit"><i class="tri"></i><ed-icon name="fBlue"></ed-icon><span>Do Melee Attack</span></div>
          <div class="hit child"><ed-icon name="vBlue"></ed-icon><span>Get CurrentWeaponSlot</span></div>
        </div>
      </div>`;
  }
}

type Field = { label: string; h: number; cell?: string; value?: string; lead?: string };
interface Section { name: string; rows: Field[]; tail: number; more?: boolean }
const SECTIONS: Section[] = [
  { name: "Variable", tail: 23, rows: [
    { label: "Variable Name", h: 44, cell: "ro", value: "CapsuleComponent" },
    { label: "Tooltip", h: 44, cell: "text" },
    { label: "Category", h: 52, cell: "category", value: "Character" },
    { label: "Editable when Inherited", h: 46, cell: "on" }] },
  { name: "Transform", tail: 22, rows: [
    { label: "Scale", h: 47, cell: "vector", lead: "caret" },
    { label: "Mobility", h: 50, cell: "mobility" }] },
  { name: "Sockets", tail: 22, rows: [{ label: "Parent Socket", h: 56, cell: "socket" }] },
  { name: "Shape", tail: 0, more: true, rows: [
    { label: "Capsule Half Height", h: 47, cell: "num", value: "88.0" },
    { label: "Capsule Radius", h: 47, cell: "num", value: "34.0" }] },
  { name: "Navigation", tail: 23, rows: [
    { label: "Area Class", h: 56, cell: "area", value: "NavArea_Obst" },
    { label: "Dynamic Obstacle", h: 46, cell: "on" }] },
  { name: "Physics", tail: 0, more: true, rows: [
    { label: "Simulate Physics", h: 47, cell: "off" },
    { label: "MassInKg", h: 47, cell: "mass", value: "114.631981", lead: "check" },
    { label: "Linear Damping", h: 47, cell: "num", value: "0.01" },
    { label: "Angular Damping", h: 47, cell: "num", value: "0.0" },
    { label: "Enable Gravity", h: 46, cell: "on" },
    { label: "Constraints", h: 46, lead: "expand" },
    { label: "Ignore Radial Impulse", h: 47, cell: "off" },
    { label: "Ignore Radial Force", h: 47, cell: "off" },
    { label: "Apply Impulse on Damage", h: 47, cell: "on" },
    { label: "Replicate Physics", h: 47, cell: "on" }] },
  { name: "Collision", tail: 0, rows: [
    { label: "Simulation Generates", h: 47, cell: "off" },
    { label: "Phys Material Override", h: 158, cell: "asset", value: "None" },
    { label: "Generate Overlap", h: 47, cell: "on" },
    { label: "Can Character Step Up", h: 50, cell: "drop", value: "No" }] },
];

@customElement("details-column")
export class DetailsColumn extends LitElement {
  static styles = [base, css`
    :host { display: flex; flex-direction: column; width: 609px; height: 100%; overflow: hidden; font-size: 21.33px; }
    .panel-tab { font-size: 24px; flex: none; }
    .panel { display: flex; flex-direction: column; flex: 1; padding: 5px 4px 0; background: #3e3e3e; overflow: hidden; }
    .top { display: flex; align-items: flex-start; height: 47px; padding: 0 4px; font-size: 24px; flex: none; }
    .top .search { width: 453px; margin: 5px 17px 0 0; }
    .top .view { display: flex; align-items: center; justify-content: center; width: 54px; height: 46px; background: linear-gradient(#dcdcdc, #a4a4a4); border: 1px solid #2a2a2a; border-radius: 3px; margin-right: 8px; }
    .top .view ed-icon { width: 30px; height: 30px; }
    .top > ed-icon { width: 34px; height: 28px; margin: 10px 6px 0 0; }
    .top .caret { margin-top: 18px; }
    .body { display: flex; flex: 1; position: relative; }
    .list { width: 601px; }
    .head { display: flex; height: 58px; background: #2f2f2f; border-radius: 6px 6px 0 0; }
    .head .title { display: flex; align-items: center; width: 199px; border-right: 2px solid #232323; padding: 0 0 4px 6px; gap: 8px; font-weight: 700; font-size: 26.67px; text-shadow: 2px 2px 0 #000; }
    .head .tri { position: relative; top: 3px; }
    .row { display: flex; }
    .label { display: flex; align-items: center; width: 199px; border-right: 2px solid #262626; overflow: hidden; white-space: nowrap; padding: 0 0 1px 32px; flex: none; }
    .label.tail { padding: 0; }
    .label .caret { margin-left: 9px; border-top-width: 9px; }
    .label.dim { color: #777; }
    .label .box { margin: 0 7px 0 2px; }
    .label svg.twist { margin: 0 9px 0 -22px; }
    .cell { display: flex; align-items: center; padding-left: 7px; }
    .gap4 { height: 4px; }
    .gap5 { height: 5px; }
    .more { display: flex; justify-content: center; height: 27px; background: #474747; border-top: 1px solid #323232; padding: 5px 32px 0 0; }
    .box { display: flex; width: 28px; height: 28px; border-radius: 3px; background: #a9a9a9; border: 1px solid #666; margin-left: 2px; flex: none; }
    .box.on { background: #dcdcdc; }
    .field { display: flex; align-items: center; background: #d8d8d8; border-radius: 5px; color: #000; }
    .ro { width: 246px; height: 31px; margin-left: 1px; padding-left: 9px; background: #7a7a7a; border-radius: 2px; color: #dcdcdc; }
    .text { width: 250px; height: 34px; }
    .category { width: 248px; height: 39px; margin-left: 1px; padding: 0 16px 0 12px; justify-content: space-between; border: 1px solid #343434; border-radius: 3px; color: #2c2c2c; background: linear-gradient(90deg, #8b8b8b 200px, #7c7c7c 202px); }
    .category .caret { border-top-color: #2a2a2a; border-top-width: 9px; }
    .num { width: 210px; height: 33px; padding: 0 12px 0 9px; justify-content: space-between; }
    .num ed-icon, .axis ed-icon { width: 18px; height: 18px; }
    .mass { width: 198px; height: 36px; padding-left: 11px; background: #7e7e7e; color: #343434; }
    .axis { width: 93px; height: 33px; margin-right: 4px; padding: 0 6px 0 7px; justify-content: space-between; border-left: 6px solid #d42a00; border-radius: 4px; }
    .axis.y { border-left-color: #69a800; }
    .axis.z { border-left-color: #2c7ef0; }
    .lock { width: 28px; height: 32px; margin-left: 3px; }
    .seg { display: flex; align-items: center; width: 109px; height: 40px; background: #5b5b5b; border-right: 3px solid #333; padding: 0 10px 0 11px; gap: 21px; }
    .seg ed-icon { width: 29px; height: 29px; }
    .seg span { overflow: hidden; width: 37px; }
    .seg.first { border-radius: 16px 0 0 16px; }
    .seg.last { background: #bb8a09; color: #000; border-radius: 0 14px 14px 0; border-right: 0; }
    .socket { width: 151px; height: 43px; background: #7a7a7a; margin: 0 14px 0 1px; border-radius: 2px; }
    .act { width: 24px; height: 24px; margin-right: 24px; }
    .act.x { width: 26px; height: 26px; margin-left: -2px; }
    .btn { display: flex; align-items: center; justify-content: space-between; height: 39px; margin-left: 1px; border: 1px solid #262626; border-radius: 3px; background: linear-gradient(#dadada, #a9a9a9); color: #000; box-shadow: inset 0 0 0 1px #d8d8d8; }
    .area { width: 173px; padding: 0 11px 0 6px; margin-right: 21px; }
    .drop { width: 208px; padding: 0 14px 0 10px; }
    .thumb { display: flex; align-items: center; justify-content: center; width: 128px; height: 128px; margin-left: 10px; background: radial-gradient(circle at 50% 90%, #504c36, #434030); border-bottom: 6px solid #c8be7c; box-shadow: 0 0 6px 3px #2a2a2a; font-size: 18.67px; text-shadow: 1px 1px 0 #000; letter-spacing: .2px; }
    .asset { margin: 30px 0 0 14px; }
    .asset .pick { display: flex; align-items: center; justify-content: space-between; width: 199px; height: 36px; padding: 0 9px 4px 5px; background: #5a5a5a; border-radius: 5px; text-shadow: 2px 2px 0 #000; color: #fff; }
    .asset .acts { display: flex; margin: 12px 0 0 12px; }
    .scroll { position: absolute; right: 5px; top: 5px; bottom: 6px; width: 22px; display: flex; flex-direction: column; align-items: center; }
    .bar { width: 22px; height: 884px; background: #fff; border: 1px solid #555; border-radius: 3px; }
    .track { flex: 1; width: 1px; background: #6c6c6c; }
  `];

  private box(on: boolean) {
    return html`<span class=${classMap({ box: true, on })}>${on ? html`<svg width="26" height="26" viewBox="0 0 26 26"><path d="M5 14L10 19L22 8" fill="none" stroke="#5c5c5c" stroke-width="5.5"/></svg>` : nothing}</span>`;
  }

  private cell(r: Field) {
    const act = (n: string) => html`<ed-icon class=${n === "cross" ? "act x" : "act"} name=${n}></ed-icon>`;
    switch (r.cell) {
      case "ro": return html`<div class="field ro">${r.value}</div>`;
      case "text": return html`<div class="field text"></div>`;
      case "category": return html`<div class="field category"><span>${r.value}</span><i class="caret"></i></div>`;
      case "on": return this.box(true);
      case "off": return this.box(false);
      case "num": return html`<div class="field num"><span>${r.value}</span><ed-icon name="spin"></ed-icon></div>`;
      case "mass": return html`<div class="field mass">${r.value}</div>`;
      case "vector": return html`${["x", "y", "z"].map((a) => html`<div class="field axis ${a}"><span>1.0</span><ed-icon name="spin"></ed-icon></div>`)}<ed-icon class="lock" name="lock"></ed-icon>`;
      case "mobility": return html`<div class="seg first"><ed-icon name="static"></ed-icon><span>Static</span></div><div class="seg"><ed-icon name="sliders"></ed-icon><span>Stationary</span></div><div class="seg last"><ed-icon name="move"></ed-icon><span>Movable</span></div>`;
      case "socket": return html`<div class="socket"></div>${act("mag")}${act("cross")}`;
      case "area": return html`<div class="btn area"><span>${r.value}</span><i class="caret dark"></i></div>${act("back")}${act("mag")}${act("cross")}`;
      case "drop": return html`<div class="btn drop"><span>${r.value}</span><i class="caret dark"></i></div>`;
      case "asset": return html`<div class="thumb">${r.value}</div><div class="asset"><div class="pick"><span>${r.value}</span><i class="caret"></i></div><div class="acts">${act("back")}${act("mag")}</div></div>`;
    }
    return nothing;
  }

  render() {
    return html`
      <div class="panel-tab"><ed-icon name="info"></ed-icon><span>Details</span><i class="close"></i></div>
      <div class="panel">
        <div class="top">
          <div class="search"><span>Search Details</span><ed-icon name="search"></ed-icon></div>
          <div class="view"><ed-icon name="grid"></ed-icon></div>
          <ed-icon name="eye"></ed-icon><i class="caret soft"></i>
        </div>
        <div class="body">
          <div class="list">
            ${SECTIONS.map((s) => html`
              <div class="head"><div class="title"><i class="tri"></i><span>${s.name}</span></div></div>
              ${s.rows.map((r) => html`<div class="row" style="height:${r.h}px">
                <div class=${classMap({ label: true, dim: r.lead === "check" })}>
                  ${r.lead === "check" ? this.box(false) : nothing}
                  ${r.lead === "expand" ? html`<svg class="twist" width="13" height="18" viewBox="0 0 13 18"><path d="M1.5 1.5V16.5H4L11.5 9L4 1.5Z" fill="none" stroke="#9a9a9a" stroke-width="2.4"/></svg>` : nothing}
                  <span>${r.label}</span>
                  ${r.lead === "caret" ? html`<i class="caret soft"></i>` : nothing}
                </div>
                <div class="cell">${this.cell(r)}</div>
              </div>`)}
              ${s.more
                ? html`<div class="gap5"></div><div class="more"><svg width="20" height="14" viewBox="0 0 20 14"><path d="M0 0h20v2H0zM0 5h20L10 14z" fill="#dcdcdc"/><path d="M0 2h20v3H0z" fill="#777"/></svg></div>`
                : html`<div class="row" style="height:${s.tail}px"><div class="label tail"></div></div><div class="gap4"></div>`}
            `)}
          </div>
          <div class="scroll"><div class="bar"></div><div class="track"></div></div>
        </div>
      </div>`;
  }
}

@customElement("app-root")
export class AppRoot extends LitElement {
  static styles = [base, css`
    :host { display: block; position: relative; width: 3840px; height: 2075px; overflow: hidden; background: #222; color: #dedede; font: 400 24px/1.172 Roboto, "Liberation Sans", sans-serif; }
    .titlebar { display: flex; align-items: flex-end; height: 53px; background: linear-gradient(rgba(20,20,20,0), rgba(20,20,20,.55)), repeating-linear-gradient(135deg, #4b4b4b 0 27px, #3c3c3c 27px 53px); }
    .logo { width: 46px; height: 40px; margin: 0 27px 9px 2px; align-self: flex-end; }
    .wtab { height: 50px; clip-path: polygon(7% 4%, 8.5% 0, 91.5% 0, 93% 4%, 100% 100%, 0 100%); background: linear-gradient(#7c7c7c, #565656); display: flex; align-items: center; text-shadow: 2px 2px 0 #222; }
    .t1 { width: 417px; padding: 0 0 6px 46px; margin-right: -17px; }
    .t2 { width: 377px; height: 49px; padding: 0 0 4px 13px; gap: 10px; margin-right: -21px; clip-path: polygon(0 4%, 2% 0, 97% 0, 98% 4%, 100% 20%, 96% 100%, 4% 100%); }
    .t3 { width: 417px; height: 48px; padding: 0 0 4px 33px; gap: 10px; background: linear-gradient(#a0a0a0, #6c6c6c); }
    .t2 .close { margin-left: auto; margin-right: 20px; }
    .t3 .close { margin-left: auto; margin-right: 38px; }
    .wtab ed-icon { height: 34px; }
    .t3 ed-icon { width: 35px; }
    .wincontrols { position: absolute; right: 6px; top: 0; display: flex; height: 31px; border: 1px solid #888; border-top: 0; border-radius: 0 0 4px 4px; background: linear-gradient(#5c5c5c, #2c2c2c); }
    .wincontrols svg { display: block; border-right: 1px solid #8a8a8a; }
    .tutorial { position: absolute; left: 3573px; top: -14px; width: 85px; height: 82px; border-radius: 50%; background: radial-gradient(circle, rgba(40,110,40,.1) 50%, rgba(30,110,30,.42)); display: flex; align-items: center; justify-content: center; }
    .menubar { display: flex; align-items: center; height: 40px; padding: 0 15px 0 1px; border: solid #000; border-width: 1px 0 2px; background: linear-gradient(#2b2b2b, #191919); }
    .menubar .m { padding: 0 20px; letter-spacing: .22px; }
    .parent { margin-left: auto; color: #777; letter-spacing: .1px; }
    .parent b { font-weight: 400; font-size: 26.67px; letter-spacing: .25px; color: #ececec; margin-left: 12px; border-bottom: 2px dotted #c8c8c8; }
    .columns { display: flex; height: 1980px; padding: 0 3px 0 2px; margin-top: 2px; }
    left-column { margin-right: 10px; }
    center-column { margin-right: 9px; }
    .mark { position: absolute; border: 6px solid #ff2110; border-radius: 8px; }
    .mark.components { left: 5px; top: 236px; width: 593px; height: 256px; }
    .mark.class { left: 3412px; top: 31px; width: 426px; height: 83px; }
  `];

  render() {
    return html`
      <div class="titlebar">
        <ed-icon class="logo" name="logo"></ed-icon>
        <div class="wtab t1">ActionRPG_P</div>
        <div class="wtab t2"><ed-icon name="plug"></ed-icon><span>Plugins</span><i class="close"></i></div>
        <div class="wtab t3"><ed-icon name="bp"></ed-icon><span>BP_Character</span><i class="close"></i></div>
      </div>
      <div class="wincontrols">
        <svg width="52" height="30" viewBox="0 0 52 30"><path d="M13 15h22v7H13z" fill="#fff"/></svg>
        <svg width="46" height="30" viewBox="0 0 46 30"><path d="M18 6h14v15h-4M12 10h12v13H12z" fill="none" stroke="#fff" stroke-width="4"/></svg>
        <svg width="79" height="30" viewBox="0 0 79 30"><path d="M28 7L46 24M46 7L28 24" stroke="#fff" stroke-width="6"/></svg>
      </div>
      <div class="tutorial"><ed-icon name="cap"></ed-icon></div>
      <div class="menubar">
        ${["File", "Edit", "Asset", "View", "Debug", "Window", "Help"].map((m) => html`<span class="m">${m}</span>`)}
        <span class="parent">Parent class: <b>RPGCharacter Base</b></span>
      </div>
      <div class="columns">
        <left-column></left-column>
        <center-column></center-column>
        <details-column></details-column>
      </div>
      <div class="mark components"></div>
      <div class="mark class"></div>`;
  }
}
